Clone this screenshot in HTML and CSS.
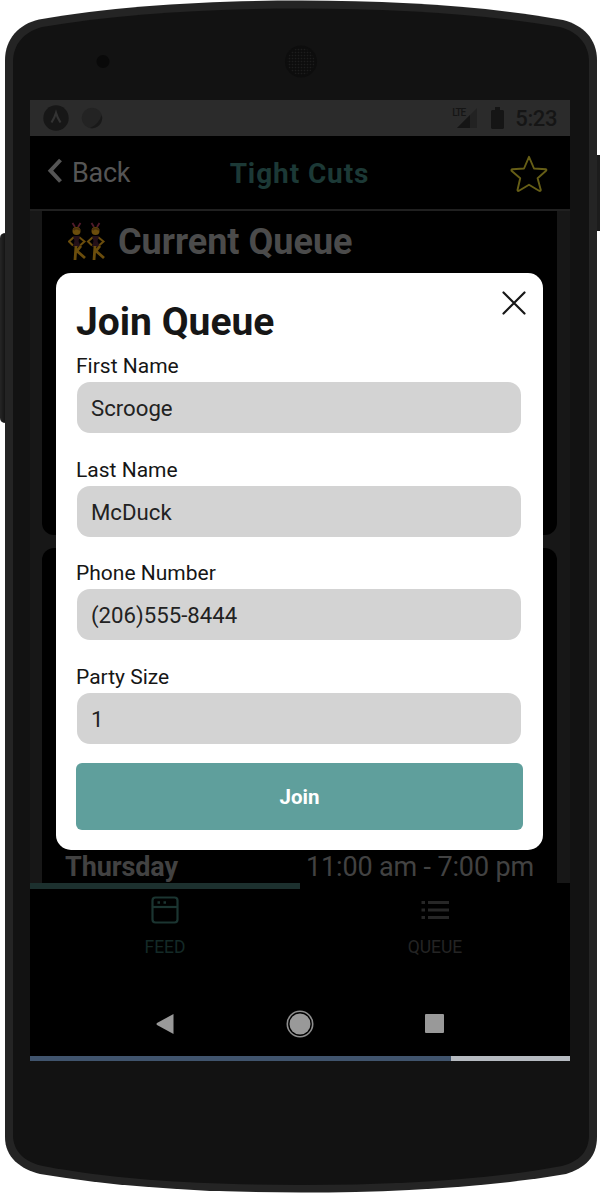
FILE: index.html
```
<!DOCTYPE html>
<html lang="en">
<head>
<meta charset="utf-8">
<title>Tight Cuts</title>
<link rel="stylesheet" href="styles.css">
</head>
<body>
<div class="phone">
  <svg class="phone-body" width="606" height="1202" viewBox="0 0 606 1202" aria-hidden="true">
    <defs>
      <linearGradient id="side"><stop offset="0" stop-color="#262626"/><stop offset="1" stop-color="#111"/></linearGradient>
      <pattern id="mesh" width="3" height="3" patternUnits="userSpaceOnUse"><circle cx="1.5" cy="1.5" r=".8" fill="#1d1d1d"/></pattern>
    </defs>
    <path d="M6 233Q0 233 0 238V418Q0 423 6 423Z" fill="url(#side)"/>
    <path d="M596 155H600V231H596Z" fill="#1c1c1c"/>
    <path d="M5 60C5 39 19 24 39 19.500C116 6 208 .5 301 .5C394 .5 486 6 563 20C583 25 597 39 597 60V1137C597 1157 585 1168 566 1174C490 1187 397 1192.500 301 1192.500C205 1192.500 116 1187 40 1174C20 1169 5 1157 5 1137Z" fill="#242424"/>
    <path d="M13 62C13 44 24 32 42 27C118 14 208 8.500 301 8.500C394 8.500 484 14 560 27C578 32 589 44 589 62V1135C589 1151 580 1161 562 1166C487 1180 396 1185 301 1185C206 1185 116 1180 43 1166C24 1162 13 1151 13 1135Z" fill="#121212"/>
    <circle cx="103" cy="61.500" r="6.500" fill="#090909"/>
    <circle cx="301" cy="61.500" r="16" fill="#0d0d0d"/>
    <circle cx="301" cy="61.500" r="13.500" fill="url(#mesh)"/>
  </svg>

  <div class="screen">
    <div class="status-bar">
      <svg width="64" height="28" viewBox="0 0 64 28"><circle cx="14" cy="14" r="12.700" fill="#171717"/><path d="M9.500 18.500Q12.500 14 14 9Q15.500 14 18.500 18.500" fill="none" stroke="#333" stroke-width="2.200"/><circle cx="50" cy="14" r="10.300" fill="#232323"/><path d="M59.700 11A10.300 10.300 0 0 1 48 24Q57 20 59.700 11Z" fill="#191919"/></svg>
      <div class="status-right">
        <span class="signal"><span class="lte">LTE</span><svg width="20" height="20" viewBox="0 0 20 20"><path d="M0 20 20 0V20Z" fill="#222"/><path d="M0 20 13 7V20Z" fill="#151515"/></svg></span>
        <svg width="13" height="22" viewBox="0 0 13 22"><path d="M4 0H9V3H12L13 4V21L12 22H1L0 21V4L1 3H4Z" fill="#151515"/></svg>
        <span class="clock">5:23</span>
      </div>
    </div>

    <div class="header">
      <div class="back"><svg width="16" height="26" viewBox="0 0 16 26"><path d="M13.500 2 3.500 12.700 13.500 23.500" fill="none" stroke="#555" stroke-width="4"/></svg><span>Back</span></div>
      <h1 class="title">Tight Cuts</h1>
      <svg class="star" width="38" height="38" viewBox="0 0 38 38"><path d="M19 1.800 24 13.500 36 14.300Q37 15 35.500 16.300L27.600 23.300 30.800 35Q30.500 36.500 29 35.700L19 29.700 9 35.700Q7.500 36.500 7.500 35L10.200 23.300 1.500 15.700Q1 14.500 2.500 14.200L14 13.500Z" fill="none" stroke="#665e16" stroke-width="1.900" stroke-linejoin="round"/></svg>
    </div>

    <div class="content">
      <section class="card queue-card">
        <h2 class="card-title">
          <svg width="38" height="40" viewBox="0 0 38 40">
            <defs><g id="dancer"><path d="M4.500 1 7 5M12.500 1 10 5" stroke="#521b2b" stroke-width="1.800"/><circle cx="8.500" cy="9" r="4" fill="#6b4d0c"/><path d="M5.500 8Q8 5 12 8" stroke="#4a2f0b" stroke-width="2" fill="none"/><path d="M6 15 1 19.500 5 23.500M11 15 16.500 19.500 12 23.500" stroke="#6b4d0c" stroke-width="2" fill="none"/><path d="M5 14H12L10.500 19 13 25H5L6.500 19Z" fill="#241018"/><path d="M8 24 7 38M13 24 9 29 17 36" stroke="#6b4d0c" stroke-width="2.800" fill="none"/></g></defs>
            <use href="#dancer"/><use href="#dancer" x="19"/>
          </svg>
          <span>Current Queue</span>
        </h2>
      </section>
      <section class="card hours-card">
        <div class="hours-row"><strong class="day">Thursday</strong><span class="hours">11:00 am - 7:00 pm</span></div>
      </section>
    </div>

    <div class="tabs">
      <div class="tab active">
        <svg width="28" height="28" viewBox="0 0 28 28" fill="none" stroke="#1b3531" stroke-width="2.200"><rect x="1.500" y="1.500" width="25" height="25" rx="3"/><path d="M2 11H26"/><path d="M6.500 6.500H9M12.500 6.500H15" stroke-width="2.500"/></svg>
        <span>FEED</span>
      </div>
      <div class="tab">
        <svg width="28" height="28" viewBox="0 0 28 28" fill="none" stroke="#272727" stroke-width="3"><path d="M.5 6.500H4M.5 14H4M.5 21.500H4M7 6.500H28M7 14H28M7 21.500H28"/></svg>
        <span>QUEUE</span>
      </div>
    </div>

    <div class="android-nav">
      <svg width="18" height="22" viewBox="0 0 18 22"><path d="M17.500 1V21L1 12Q0 11 1 10Z" fill="#999"/></svg>
      <svg width="28" height="28" viewBox="0 0 28 28"><circle cx="14" cy="14" r="12.700" fill="none" stroke="#8e8e8e" stroke-width="1.600"/><circle cx="14" cy="14" r="10.500" fill="#999"/></svg>
      <svg width="19" height="19" viewBox="0 0 19 19"><rect width="19" height="19" rx="1" fill="#999"/></svg>
    </div>
    <div class="progress"><div class="progress-fill"></div></div>

    <form class="modal">
      <svg class="close" width="24" height="24" viewBox="0 0 24 24"><path d="M1.500 1.500 22.500 22.500M22.500 1.500 1.500 22.500" stroke="#171717" stroke-width="2.200" stroke-linecap="round"/></svg>
      <h2 class="modal-title">Join Queue</h2>
      <label class="field"><span class="label">First Name</span><span class="input">Scrooge</span></label>
      <label class="field"><span class="label">Last Name</span><span class="input">McDuck</span></label>
      <label class="field"><span class="label">Phone Number</span><span class="input">(206)555-8444</span></label>
      <label class="field"><span class="label">Party Size</span><span class="input">1</span></label>
      <button class="join" type="button">Join</button>
    </form>
  </div>
</div>
</body>
</html>
```
FILE: styles.css
```
* { box-sizing: border-box; }
body { margin: 0; background: #fff; font-family: Roboto, sans-serif; }
svg { display: block; flex: none; }
h1, h2 { margin: 0; }

.phone { position: relative; width: 606px; height: 1202px; padding: 100px 36px 141px 30px; overflow: hidden; }
.phone-body { position: absolute; left: 0; top: 0; }

.screen { position: relative; width: 540px; height: 961px; display: flex; flex-direction: column; background: #000; }

.status-bar { height: 36px; flex: none; display: flex; align-items: center; justify-content: space-between; padding: 0 13px 0 12px; background: #2b2b2b; }
.status-right { display: flex; align-items: center; gap: 14px; color: #151515; }
.signal { display: flex; align-items: flex-end; }
.lte { align-self: flex-start; width: 5px; font-size: 10px; line-height: 10px; font-weight: 500; white-space: nowrap; letter-spacing: -1px; }
.clock { margin-left: -3px; padding-top: 1px; font-size: 22px; line-height: 36px; font-weight: 500; letter-spacing: -0.4px; }

.header { height: 75px; flex: none; display: grid; grid-template-columns: 1fr auto 1fr; align-items: center; padding: 1px 18px 0 17px; border-bottom: 2px solid #202020; }
.back { display: flex; align-items: center; gap: 9px; font-size: 27px; color: #555; letter-spacing: -0.3px; }
.back svg { margin-top: -5px; }
.title { font-size: 28px; font-weight: 700; color: #1c3936; letter-spacing: 0.9px; }
.star { justify-self: end; margin-top: 2px; margin-right: 4px; }

.content { height: 672px; flex: none; display: flex; flex-direction: column; gap: 13px; padding: 0 13px 0 12px; background: #171717; }
.card { background: #000; border-radius: 12px; }
.queue-card { height: 324px; border-radius: 0 0 12px 12px; padding: 10px 26px; }
.card-title { display: flex; align-items: center; gap: 12px; font-size: 36px; line-height: 42px; font-weight: 700; color: #4b4b4b; }
.hours-card { flex: 1; display: flex; align-items: flex-end; border-radius: 12px 12px 0 0; padding: 0 23px; }
.hours-row { flex: 1; display: flex; justify-content: space-between; font-size: 27px; line-height: 32px; color: #424242; }
.day { font-weight: 700; letter-spacing: -0.1px; }
.hours { letter-spacing: -0.15px; }

.tabs { height: 108px; flex: none; display: grid; grid-template-columns: 1fr 1fr; }
.tab { display: flex; flex-direction: column; align-items: center; gap: 12px; padding-top: 7px; border-top: 6px solid transparent; font-size: 17.5px; line-height: 22px; color: #242424; }
.tab.active { border-top-color: #1c302e; color: #142a27; }

.android-nav { flex: 1; display: flex; align-items: center; justify-content: space-between; padding: 0 126px 0 126px; }
.progress { height: 5px; flex: none; background: #b5bac0; }
.progress-fill { width: 421px; height: 100%; background: #40546d; }

.modal { position: absolute; left: 26px; top: 173px; width: 487px; height: 577px; padding: 26px 20px 0; border-radius: 15px; background: #fff; color: #161616; }
.close { position: absolute; left: 446px; top: 18px; }
.modal-title { font-size: 39px; line-height: 46px; font-weight: 700; margin-bottom: 9px; }
.field { display: flex; flex-direction: column; height: 103.5px; }
.label { height: 28px; line-height: 24px; font-size: 21px; }
.input { display: block; width: 444px; height: 51px; margin-left: 1px; padding-left: 14px; border-radius: 13px; background: #d3d3d3; font-size: 22.2px; line-height: 53px; color: #222; }
.join { display: block; width: 447px; height: 67px; margin-top: -5px; padding: 0; border: 0; border-radius: 6px; background: #5f9f9c; color: #fff; font: 700 20.5px/69px Roboto, sans-serif; }
```
